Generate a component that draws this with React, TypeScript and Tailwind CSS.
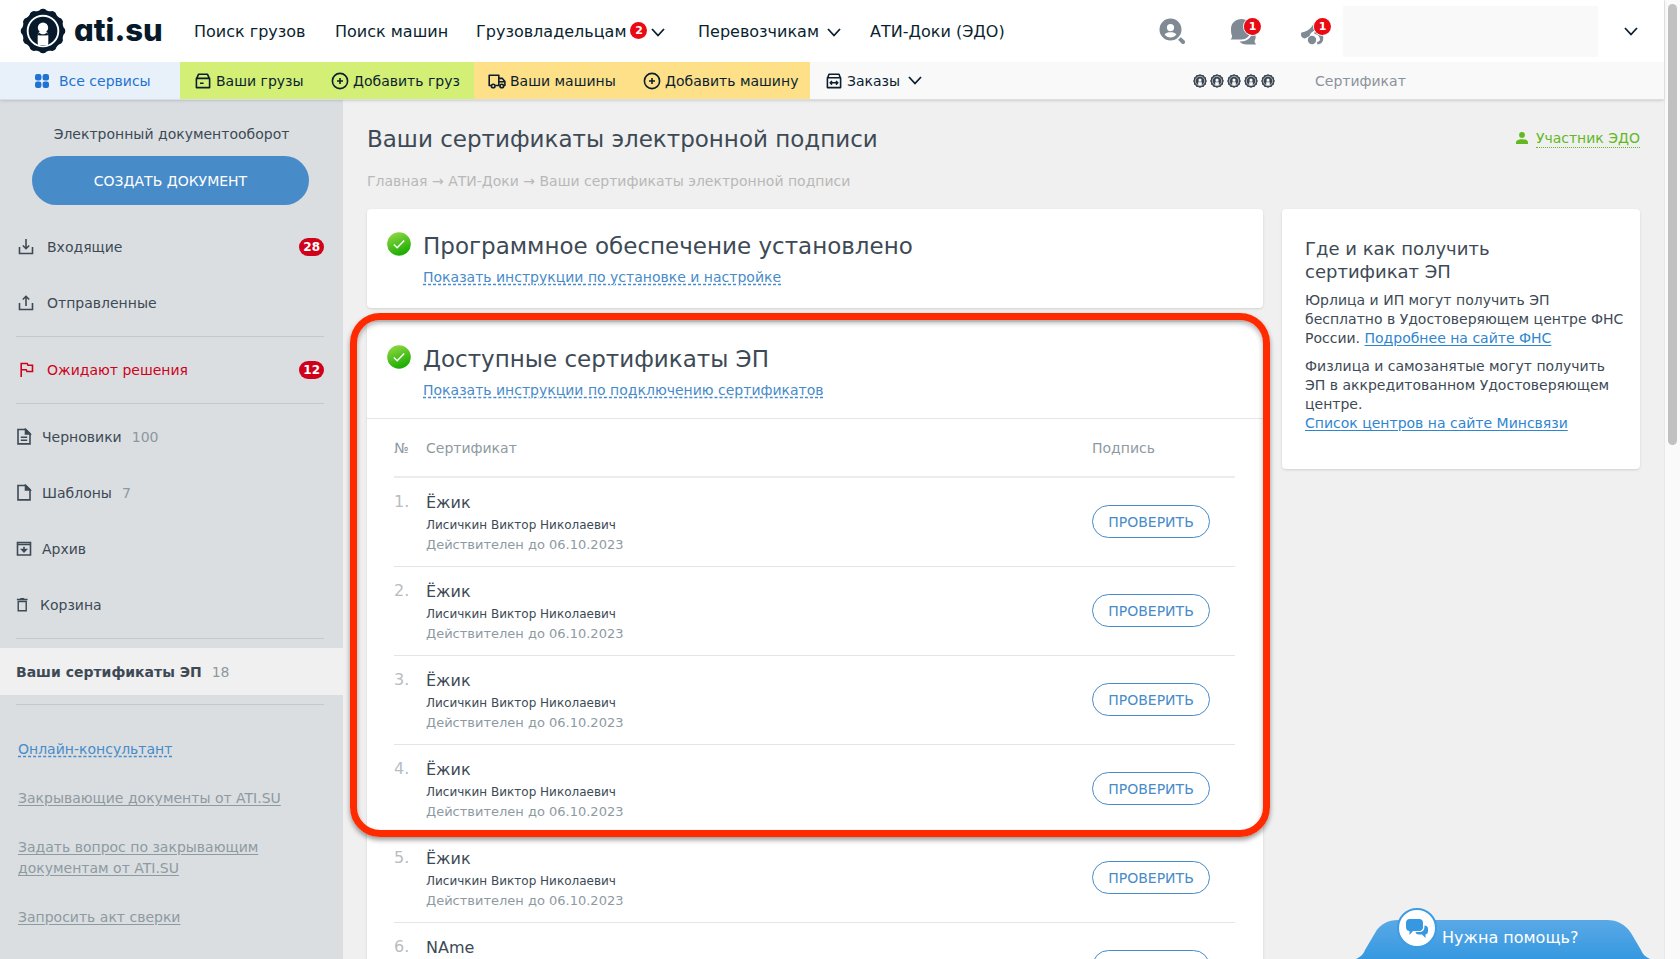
import type { ReactNode } from "react";

const certificates = [
  { id: 1, name: "Ёжик" },
  { id: 2, name: "Ёжик" },
  { id: 3, name: "Ёжик" },
  { id: 4, name: "Ёжик" },
  { id: 5, name: "Ёжик" },
  { id: 6, name: "NAme" },
];

// Outline of a wheel with rounded teeth, centred on 24,24
function wheelPath(teeth: number, radius: number, depth: number) {
  const points: string[] = [];
  for (let i = 0; i < 240; i++) {
    const angle = (i / 240) * Math.PI * 2 - Math.PI / 2;
    const wave = Math.cos((i / 240) * Math.PI * 2 * teeth);
    const r = radius + depth * Math.sign(wave) * Math.pow(Math.abs(wave), 0.6);
    points.push(
      `${(24 + r * Math.cos(angle)).toFixed(2)} ${(24 + r * Math.sin(angle)).toFixed(2)}`,
    );
  }
  return `M${points.join("L")}Z`;
}

const wheel = wheelPath(12, 22.4, 0.8);

function Wheel({ className, back }: { className: string; back: string }) {
  return (
    <svg viewBox="0 0 48 48" className={className} aria-hidden="true">
      <path d={wheel} fill="currentColor" />
      <circle cx="24" cy="24" r="16" fill="none" stroke={back} strokeWidth="2" />
      <circle cx="24" cy="20.5" r="5.4" fill={back} />
      <path
        d="M18.600 38.500V28C18.600 26 20 24.500 21.500 24.500H26.500C28 24.500 29.400 26 29.400 28V38.500Z"
        fill={back}
      />
      <path d="M19.600 25.200C22 28 26 28 28.400 25.200L29.600 28.500 27 29H21L18.400 28.500Z" fill="currentColor" />
      <path d="M18.600 28.800H29.400V37H18.600Z" fill={back} />
    </svg>
  );
}

function Chevron() {
  return (
    <svg viewBox="0 0 14 9" className="h-[9px] w-3.5" fill="none" stroke="currentColor" strokeWidth="1.8" aria-hidden="true">
      <path d="M1 1l6 6.5L13 1" />
    </svg>
  );
}

function Stroke({ children, className = "size-[18px]" }: { children: ReactNode; className?: string }) {
  return (
    <svg
      viewBox="0 0 18 18"
      className={`${className} shrink-0`}
      fill="none"
      stroke="currentColor"
      strokeWidth="1.6"
      aria-hidden="true"
    >
      {children}
    </svg>
  );
}

function PlusCircle() {
  return (
    <Stroke>
      <circle cx="9" cy="9" r="7.6" />
      <path d="M9 6v6M6 9h6" />
    </Stroke>
  );
}

function CheckBadge() {
  return (
    <svg viewBox="0 0 24 24" className="mt-px size-6 shrink-0" aria-hidden="true">
      <defs>
        <linearGradient id="ok" x1="0" y1="0" x2="0.4" y2="1">
          <stop offset="0" stopColor="#9bdc4a" />
          <stop offset="1" stopColor="#1fae04" />
        </linearGradient>
      </defs>
      <circle cx="12" cy="12" r="11.8" fill="url(#ok)" />
      <path d="M6.800 12.400l3.400 3.400 7-7.400" fill="none" stroke="#fff" strokeWidth="1.4" />
    </svg>
  );
}

function Dot({ children }: { children: ReactNode }) {
  return (
    <span className="flex size-[17px] items-center justify-center rounded-full bg-[#ea0a14] text-[11px] leading-none font-bold text-white">
      {children}
    </span>
  );
}

function SideItem({
  icon,
  label,
  count,
  badge,
  wide,
  red,
}: {
  icon: ReactNode;
  label: string;
  count?: number;
  badge?: number;
  wide?: boolean;
  red?: boolean;
}) {
  return (
    <a
      href="#"
      className={`flex h-14 items-center pr-[19px] ${wide ? "gap-3 pl-[17px]" : "gap-2 pl-4"} ${red ? "text-[#d0021b]" : ""}`}
    >
      {icon}
      <span>{label}</span>
      {count !== undefined && <span className="ml-0.5 text-[#8e979e]">{count}</span>}
      {badge !== undefined && (
        <span className="ml-auto flex h-[18px] items-center rounded-full bg-[#d0021b] px-1 text-xs font-bold text-white">
          {badge}
        </span>
      )}
    </a>
  );
}

function Divider() {
  return <hr className="my-[5px] mr-[19px] ml-4 border-[#c3c8cc]" />;
}

function Header() {
  return (
    <header className="relative z-10 border-b border-[#d9dfe3] shadow-sm">
      <div className="flex h-[62px] items-center bg-white text-base whitespace-nowrap text-[#0b1f30]">
        <a href="#" className="ml-5 flex w-[174px] items-center gap-2 text-[#071a2b]">
          <Wheel className="size-[46px]" back="#fff" />
          <span className="pb-1 font-['Inter'] text-[31px] leading-none font-extrabold [font-feature-settings:'cv11','ss03']">
            ati.su
          </span>
        </a>
        <nav className="flex items-center pt-0.5">
          <a href="#" className="w-[141px]">Поиск грузов</a>
          <a href="#" className="w-[141px]">Поиск машин</a>
          <button className="flex w-[222px] items-center gap-1">
            Грузовладельцам
            <span className="mb-1"><Dot>2</Dot></span>
            <Chevron />
          </button>
          <button className="flex w-[172px] items-center gap-2">
            Перевозчикам
            <Chevron />
          </button>
          <a href="#">АТИ-Доки (ЭДО)</a>
        </nav>
        <div className="ml-auto flex items-center text-[#7f8a94]">
          <button aria-label="Поиск участников" className="mr-11">
            <svg viewBox="0 0 27 27" className="size-[27px]" fill="currentColor">
              <path
                fillRule="evenodd"
                d="M11.500 0.500a11 11 0 1 0 0 22 11 11 0 0 0 0-22zM11.500 6a3.600 3.600 0 1 1 0 7.200 3.600 3.600 0 0 1 0-7.200zM5.600 16.600C6.600 14.600 9 14.200 11.500 14.200s4.900.400 5.900 2.400C16 18.600 13.800 19.400 11.500 19.400S7 18.600 5.600 16.600z"
              />
              <path d="M21.800 19.200l3.700 3.400c1.800 1.800-1 4.600-2.800 2.800l-3.600-3.600z" />
            </svg>
          </button>
          <button aria-label="Сообщения" className="relative mr-[43px]">
            <svg viewBox="0 0 27 27" className="size-[27px]" fill="currentColor">
              <path d="M11.500 1C17 1 21 4.800 21 11s-4 10.500-9.500 10.500H.500c1.600-1.600 1.600-2.600 1.600-3.800C1 15.800 1 13 1 11 1 4.800 6 1 11.500 1z" />
              <path d="M22.500 12.500c4 3.500 3.700 8 2 10.500 0 1.200.600 2.200 1.800 3.500H17c-3.500 0-6-1-7.500-3 7.500.500 12.500-4 13-11z" />
            </svg>
            <span className="absolute -top-px -right-[5px] rounded-full border border-white"><Dot>1</Dot></span>
          </button>
          <button aria-label="Новости" className="relative mr-4">
            <svg viewBox="0 0 27 27" className="size-[27px]" fill="currentColor">
              <path d="M14.500 3.500c1.500 3 3 6 6 9-5-1.200-9.500.500-11 5.500L5 20.500C1.500 20 0 17 1.500 14.500c6.500-1 10.500-4.500 13-11z" />
              <circle cx="12" cy="22" r="4.200" />
              <path d="M14.500 13.800c5.500-1.600 9 2 8.800 6.200 0 3.500-1.800 6-5.800 6.500l-.500-2.500c3-.500 3.500-2.500 2.500-4.500-.800-2-2.500-3.500-5-3.500z" />
            </svg>
            <span className="absolute -top-px -right-[5px] rounded-full border border-white"><Dot>1</Dot></span>
          </button>
          <div className="h-[51px] w-[255px] bg-[#f9f9f9]" />
        </div>
        <button aria-label="Профиль" className="mr-[26px] ml-[26px]">
          <Chevron />
        </button>
      </div>

      <div className="flex h-[37px] items-stretch bg-[#f9f9f9] text-sm whitespace-nowrap text-[#0b1f30]">
        <a href="#" className="flex w-[180px] items-center gap-2.5 bg-[#e8f0fa] pl-[35px] text-[#1f73d2]">
          <svg viewBox="0 0 14 14" className="size-3.5" fill="currentColor" aria-hidden="true">
            <rect width="6.400" height="6.400" rx="2.200" />
            <rect x="7.600" width="6.400" height="6.400" rx="2.200" />
            <rect y="7.600" width="6.400" height="6.400" rx="2.200" />
            <rect x="7.600" y="7.600" width="6.400" height="6.400" rx="2.200" />
          </svg>
          Все сервисы
        </a>
        <div className="flex w-[294px] items-center bg-[#d3ef75] pl-3.5">
          <a href="#" className="flex w-[137px] items-center gap-1">
            <Stroke>
              <path d="M2.800 6.200L4.600 2.200h8.800l1.800 4M2.400 6.400h13.200v9.200H2.400zM6 11.200h3.600" strokeLinejoin="round" />
            </Stroke>
            Ваши грузы
          </a>
          <a href="#" className="flex items-center gap-1">
            <PlusCircle />
            Добавить груз
          </a>
        </div>
        <div className="flex w-[336px] items-center bg-[#fde087] pl-3.5">
          <a href="#" className="flex w-[155px] items-center gap-1">
            <Stroke>
              <path d="M3 13.500H1.200V3.200h9.600v10.300H7.200M10.800 6.400h3.600l2.500 3v4.100h-1M10.800 13.500h1M10.800 9.800h5.800" strokeLinejoin="round" />
              <circle cx="5.200" cy="14" r="1.800" />
              <circle cx="13.800" cy="14" r="1.800" />
            </Stroke>
            Ваши машины
          </a>
          <a href="#" className="flex items-center gap-1">
            <PlusCircle />
            Добавить машину
          </a>
        </div>
        <button className="flex items-center gap-2 pl-[15px]">
          <span className="-mr-1">
            <Stroke>
              <path d="M2.600 6L4 2.200h10L15.400 6M2.400 5.800h13.200v9.800H2.400zM5.400 10.800h7.200M7 9l-1.800 1.800L7 12.600M11 9l1.800 1.800-1.800 1.800" strokeLinejoin="round" />
            </Stroke>
          </span>
          Заказы
          <Chevron />
        </button>
        <div className="mr-10 ml-auto flex items-center gap-[3px] text-[#3a4652]">
          {[1, 2, 3, 4, 5].map((star) => (
            <Wheel key={star} className="size-3.5" back="#f9f9f9" />
          ))}
        </div>
        <span className="flex w-[349px] items-center text-[#8a929b]">Сертификат</span>
      </div>
    </header>
  );
}

function Sidebar() {
  const link = "underline underline-offset-2";
  return (
    <aside className="w-[343px] shrink-0 bg-[#dadee1] pt-6 text-sm leading-5 text-[#3d4a55]">
      <p className="text-center">Электронный документооборот</p>
      <button className="mx-8 mt-3 mb-3.5 flex h-[49px] w-[277px] items-center justify-center rounded-full bg-[#478bc9] text-sm font-medium text-white">
        СОЗДАТЬ ДОКУМЕНТ
      </button>
      <SideItem
        wide
        badge={28}
        label="Входящие"
        icon={
          <Stroke>
            <path d="M2.500 9v6.500h13V9M9 1v9.500M5.800 7.500L9 10.700l3.200-3.200" />
          </Stroke>
        }
      />
      <SideItem
        wide
        label="Отправленные"
        icon={
          <Stroke>
            <path d="M2.500 9v6.500h13V9M9 12V2.500M5.800 5.500L9 2.300l3.200 3.200" />
          </Stroke>
        }
      />
      <Divider />
      <SideItem
        wide
        red
        badge={12}
        label="Ожидают решения"
        icon={
          <Stroke>
            <path d="M4.200 16V2.500h6l.8 1.800h4.500V10.500H10l-.8-1.800H4.200" />
          </Stroke>
        }
      />
      <Divider />
      <SideItem
        count={100}
        label="Черновики"
        icon={
          <Stroke>
            <path d="M2 1.500h7.800L14 5.700v10.200H2zM4.800 9.200h6.400M4.800 12.200h6.400" />
            <path d="M9.500 1.500V6H14z" fill="currentColor" />
          </Stroke>
        }
      />
      <SideItem
        count={7}
        label="Шаблоны"
        icon={
          <Stroke>
            <path d="M2 1.500h7.800L14 5.700v10.200H2z" />
            <path d="M9.500 1.500V6H14z" fill="currentColor" />
          </Stroke>
        }
      />
      <SideItem
        label="Архив"
        icon={
          <Stroke>
            <path d="M1.500 2.500h13v12.500h-13zM1.500 4.500h13" />
            <path d="M8 6.800v5M5.800 9.500L8 11.800l2.200-2.300z" fill="currentColor" />
          </Stroke>
        }
      />
      <SideItem
        label="Корзина"
        icon={
          <Stroke className="h-[18px] w-4">
            <path d="M2.500 5h9v10.500h-9zM1 2.800h12M4.800 2h4.400" />
          </Stroke>
        }
      />
      <Divider />
      <a href="#" className="my-[9px] flex h-[47px] items-center gap-2.5 bg-[#f0f0f0] px-4 font-bold">
        Ваши сертификаты ЭП
        <span className="font-normal text-[#8e979e]">18</span>
      </a>
      <Divider />
      <div className="mt-[34px] flex flex-col items-start gap-7 px-[18px] leading-[21px] text-[#8e9aa2]">
        <a href="#" className="text-[#478bc9] underline decoration-dashed underline-offset-2">
          Онлайн-консультант
        </a>
        <a href="#" className={link}>Закрывающие документы от ATI.SU</a>
        <a href="#" className={link}>Задать вопрос по закрывающим документам от ATI.SU</a>
        <a href="#" className={link}>Запросить акт сверки</a>
      </div>
    </aside>
  );
}

function CardHeading({ title, link }: { title: string; link: string }) {
  return (
    <div className="flex gap-3 pt-[22px] pl-5">
      <CheckBadge />
      <div>
        <h2 className="text-[23px] leading-[30px]">{title}</h2>
        <a
          href="#"
          className="mt-1.5 inline-block text-sm leading-5 text-[#478bc9] underline decoration-dashed underline-offset-2"
        >
          {link}
        </a>
      </div>
    </div>
  );
}

function Certificates() {
  return (
    <section className="relative mt-3.5 rounded bg-white shadow-sm">
      <div className="h-24">
        <CardHeading title="Доступные сертификаты ЭП" link="Показать инструкции по подключению сертификатов" />
      </div>
      <div className="border-t border-[#e1e6e9] pr-7 pl-[27px]">
        <table className="w-full text-left">
          <thead className="text-sm text-[#8e9aa2]">
            <tr className="h-[58px] border-b-2 border-[#e9edee]">
              <th className="w-8 font-normal">№</th>
              <th className="font-normal">Сертификат</th>
              <th className="w-[143px] font-normal">Подпись</th>
            </tr>
          </thead>
          <tbody>
            {certificates.map((certificate) => (
              <tr key={certificate.id} className="h-[89px] border-b border-[#e1e6e9]">
                <td className="pt-3 align-top text-base leading-6 text-[#b8bcbf]">{certificate.id}.</td>
                <td className="pt-[13px] align-top leading-5">
                  <p className="text-base leading-6">{certificate.name}</p>
                  <p className="text-xs leading-5">Лисичкин Виктор Николаевич</p>
                  <p className="text-[13px] text-[#8e9aa2]">Действителен до 06.10.2023</p>
                </td>
                <td>
                  <button className="flex h-[33px] w-[118px] items-center justify-center rounded-full border border-[#478bc9] text-sm text-[#478bc9]">
                    ПРОВЕРИТЬ
                  </button>
                </td>
              </tr>
            ))}
          </tbody>
        </table>
      </div>
      <div className="pointer-events-none absolute -top-[9px] -right-[7px] -left-[17px] h-[524px] rounded-[30px] border-[7px] border-[#ff2a00] shadow-[0_3px_5px_rgba(0,0,0,0.4),inset_0_3px_5px_rgba(0,0,0,0.3)]" />
    </section>
  );
}

function CertificateHelp() {
  const link = "text-[#2f86d0] underline underline-offset-2";
  return (
    <aside className="h-[260px] w-[358px] shrink-0 rounded bg-white pt-7 pr-3 pl-[23px] text-sm leading-[19px] shadow">
      <h3 className="text-lg leading-[23px]">
        Где и как получить
        <br />
        сертификат ЭП
      </h3>
      <p className="mt-2">
        Юрлица и ИП могут получить ЭП бесплатно в Удостоверяющем центре ФНС России.{" "}
        <a href="#" className={link}>Подробнее на сайте ФНС</a>
      </p>
      <p className="mt-[9px]">
        Физлица и самозанятые могут получить
        <br />
        ЭП в аккредитованном Удостоверяющем центре.
        <br />
        <a href="#" className={link}>Список центров на сайте Минсвязи</a>
      </p>
    </aside>
  );
}

function HelpTab() {
  return (
    <button className="absolute right-[30px] bottom-0 h-[52px] w-[294px] text-white">
      <svg viewBox="0 0 294 52" className="absolute inset-0 size-full" aria-hidden="true">
        <defs>
          <linearGradient id="tab" x1="0" y1="0" x2="0" y2="1">
            <stop offset="0" stopColor="#5aa9e6" />
            <stop offset="1" stopColor="#3598e0" />
          </linearGradient>
        </defs>
        <path
          d="M0 52C4 50 7 48 9 43L19 26C24 17 32 13 42 13H251C261 13 269 17 275 26L285 43C287 48 290 50 294 52Z"
          fill="url(#tab)"
        />
        <circle cx="61" cy="21" r="19" fill="#fff" stroke="#3d9ce3" strokeWidth="2" />
        <path
          d="M54 12h9q4 0 4 4v4q0 4-4 4h-6l-3.500 4V24Q50 24 50 20v-4q0-4 4-4z"
          fill="#3598e0"
        />
        <path
          d="M68.500 18.500q3.500 0 3.500 3.500v2q0 3-2.500 3.500v3.500l-3.500-3.500h-3q-3 0-3.500-2.500h3.500q5.500 0 5.500-5.500z"
          fill="#3598e0"
        />
      </svg>
      <span className="relative flex h-full items-center pt-2.5 pl-[86px] text-base">Нужна помощь?</span>
    </button>
  );
}

export default function App() {
  return (
    <div className="relative flex h-screen overflow-hidden bg-[#f0f0f0] font-['DejaVu_Sans',sans-serif] text-[#3d4a55]">
      <div className="flex min-w-0 flex-1 flex-col">
        <Header />
        <div className="flex min-h-0 flex-1">
          <Sidebar />
          <main className="min-w-0 flex-1 px-6 pt-6">
            <div className="flex items-center justify-between">
              <h1 className="text-[23px] leading-[30px]">Ваши сертификаты электронной подписи</h1>
              <div className="flex items-center gap-2 pb-0.5 text-sm text-[#62b81f]">
                <svg viewBox="0 0 12 12" className="size-3" fill="currentColor" aria-hidden="true">
                  <circle cx="6" cy="2.900" r="2.900" />
                  <path d="M0 12V10.500C0 8 3 7.200 6 7.200s6 .8 6 3.300V12z" />
                </svg>
                <a href="#" className="border-b border-dotted border-[#62b81f] leading-[18px]">Участник ЭДО</a>
              </div>
            </div>
            <p className="mt-[17px] text-sm leading-5 text-[#b8b8b8]">
              <a href="#">Главная</a> → <a href="#">АТИ-Доки</a> → Ваши сертификаты электронной подписи
            </p>
            <div className="mt-[18px] flex gap-[19px]">
              <div className="min-w-0 flex-1">
                <section className="h-[99px] rounded bg-white shadow-sm">
                  <CardHeading title="Программное обеспечение установлено" link="Показать инструкции по установке и настройке" />
                </section>
                <Certificates />
              </div>
              <CertificateHelp />
            </div>
          </main>
        </div>
      </div>
      <div className="w-4 shrink-0 border-l border-[#e8e8e8] bg-[#fafafa] px-[3px] pt-1">
        <div className="h-[441px] rounded-full bg-[#c1c1c1]" />
      </div>
      <div className="absolute right-0 bottom-0 left-0 h-0">
        <HelpTab />
      </div>
    </div>
  );
}
